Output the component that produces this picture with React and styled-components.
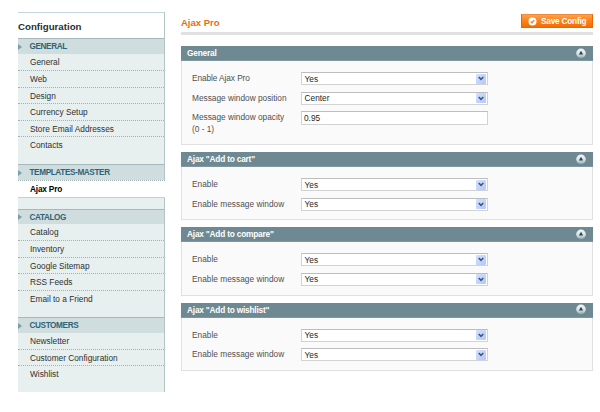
import React from "react";
import styled, { createGlobalStyle, css } from "styled-components";

const GlobalStyle = createGlobalStyle`
  * { box-sizing: border-box; }
  body {
    margin: 0;
    background: #fff;
    font-family: "Liberation Sans", Arial, sans-serif;
    font-size: 8.3px;
    color: #2f2f2f;
  }
`;

const Page = styled.div`
  display: flex;
  gap: 16px;
  width: 600px;
  height: 412px;
  padding: 12px 7px 0 18px;
  overflow: hidden;
`;

const Sidebar = styled.nav`
  width: 147px;
  height: 380px;
  flex: none;
  background: #e7efef;
  border-top: 1px solid #c5d8d9;
  border-right: 1px solid #b4c5c6;
`;

const SidebarTitle = styled.h3`
  margin: 0;
  height: 25px;
  padding-top: 1px;
  background: #fff;
  font-size: 9.7px;
  line-height: 26px;
  font-weight: bold;
  color: #253033;
`;

const Group = styled.section`
  height: ${(p) => p.$height}px;
`;

const GroupTitle = styled.h4`
  display: flex;
  align-items: center;
  gap: 7.5px;
  margin: 0;
  height: ${(p) => p.$height || 16}px;
  background: #d0dddf;
  border-top: 1px solid #a3b9bd;
  font-size: 8.2px;
  letter-spacing: -0.38px;
  font-weight: bold;
  color: #2f6477;
`;

const Marker = styled.span`
  border-left: 4.5px solid #79a0ac;
  border-top: 3px solid transparent;
  border-bottom: 3px solid transparent;
`;

const activeItem = css`
  height: 17px;
  margin-right: -1px;
  background: #fff;
  border-top: 1px dotted #9fb0b1;
  border-bottom: 1px solid #c3d1d2;
  font-size: 8.3px;
  letter-spacing: -0.2px;
  font-weight: bold;
  color: #000;
  line-height: 16px;
`;

const Item = styled.a`
  display: block;
  height: 16.6px;
  padding-left: 12px;
  line-height: 16px;
  white-space: nowrap;
  border-bottom: 1px dotted #a2b1b2;
  &:last-child { border-bottom-color: transparent; }
  ${(p) => p.$active && activeItem}
  ${(p) => p.$active && css`&:last-child { height: 18px; border-bottom-color: #c3d1d2; }`}
`;

const Main = styled.main`
  flex: none;
  width: 412px;
`;

const Header = styled.header`
  display: flex;
  justify-content: space-between;
  align-items: flex-start;
  height: 23px;
  margin-bottom: 11px;
  padding-top: 2px;
  border-bottom: 3px solid #e1e1e1;
`;

const Heading = styled.h2`
  margin: 0;
  font-size: 9.5px;
  line-height: 18px;
  font-weight: bold;
  color: #eb6a12;
`;

const SaveButton = styled.button`
  display: flex;
  align-items: center;
  gap: 4px;
  width: 72px;
  height: 14px;
  padding: 0 0 0 6px;
  border: 1px solid #ed6502;
  border-top-color: #f18a3a;
  background: linear-gradient(#fda04a, #fb8420 45%, #f56d00);
  color: #fff;
  font: bold 8.3px "Liberation Sans", Arial, sans-serif;
  letter-spacing: -0.24px;
  white-space: nowrap;
`;

const Panel = styled.section`
  margin-bottom: 7px;
`;

const PanelHead = styled.div`
  display: flex;
  align-items: center;
  justify-content: space-between;
  height: 15px;
  padding: 0 7px 0 6px;
  background: #6f8992;
  border-bottom: 1px solid #7f979d;
  color: #fff;
  font-size: 8.3px;
  letter-spacing: -0.2px;
  font-weight: bold;
`;

const PanelBody = styled.div`
  display: flex;
  flex-direction: column;
  gap: 6.5px;
  height: ${(p) => p.$height}px;
  padding: 11px 0 0 10px;
  background: #fafafa;
  border: 1px solid #e0e0e0;
  border-top: 0;
`;

const Field = styled.div`
  display: grid;
  grid-template-columns: 109px 187px;
  height: 13px;
`;

const Label = styled.label`
  line-height: 12px;
  letter-spacing: ${(p) => p.$spacing || 0}px;
  color: #505050;
  white-space: pre-line;
`;

const Control = styled.div`
  display: flex;
  justify-content: space-between;
  align-items: center;
  height: ${(p) => (p.$text ? 14 : 13)}px;
  padding: 0 1px 0 2px;
  background: #fff;
  border: 1px solid #d2d2d2;
  border-top-color: #bdbdbd;
  color: #262626;
`;

const Value = styled.span`
  padding-left: ${(p) => (p.$text ? 0 : 0.6)}px;
`;

const Arrow = styled.span`
  display: flex;
  align-items: center;
  justify-content: center;
  width: 10px;
  height: 10px;
  border-radius: 1px;
  background: linear-gradient(135deg, #d5e1fd, #afc8fa);
`;

const Chevron = () => (
  <svg width="6" height="5" viewBox="0 0 6 5">
    <path d="M.7 1 3 3.3 5.3 1" fill="none" stroke="#41557d" strokeWidth="1.6" />
  </svg>
);

const Collapse = () => (
  <svg width="10" height="11" viewBox="0 0 10 11">
    <defs>
      <linearGradient id="knob" x1="0" y1="0" x2="0" y2="1">
        <stop offset="0" stopColor="#f4f8f8" />
        <stop offset=".6" stopColor="#d4e0e2" />
        <stop offset="1" stopColor="#91a9af" />
      </linearGradient>
    </defs>
    <circle cx="5" cy="5.3" r="4.8" fill="url(#knob)" />
    <path d="M5 2.7 7.1 6.5H2.9Z" fill="#21464f" />
  </svg>
);

const CheckIcon = () => (
  <svg width="9" height="9" viewBox="0 0 9 9">
    <circle cx="4.5" cy="4.5" r="4" fill="#fff" />
    <path d="M2.7 4.5 4 5.8 6.3 2.9" fill="none" stroke="#f07a1c" strokeWidth="1.2" />
  </svg>
);

const groups = [
  { title: "GENERAL", height: 126, head: 16.4, items: ["General", "Web", "Design", "Currency Setup", "Store Email Addresses", "Contacts"] },
  { title: "TEMPLATES-MASTER", height: 45, head: 16, items: ["Ajax Pro"] },
  { title: "CATALOG", height: 108, head: 15.4, items: ["Catalog", "Inventory", "Google Sitemap", "RSS Feeds", "Email to a Friend"] },
  { title: "CUSTOMERS", height: 75, head: 16, items: ["Newsletter", "Customer Configuration", "Wishlist"] },
];

const toggles = [
  { label: "Enable", value: "Yes" },
  { label: "Enable message window", value: "Yes", spacing: 0.02 },
];

const panels = [
  {
    title: "General",
    height: 84,
    fields: [
      { label: "Enable Ajax Pro", value: "Yes", spacing: -0.08 },
      { label: "Message window position", value: "Center" },
      { label: "Message window opacity\n(0 - 1)", value: "0.95", text: true },
    ],
  },
  { title: 'Ajax "Add to cart"', height: 53.4, fields: toggles },
  { title: 'Ajax "Add to compare"', height: 53.4, fields: toggles },
  { title: 'Ajax "Add to wishlist"', height: 53.4, fields: toggles },
];

export default function App() {
  return (
    <>
      <GlobalStyle />
      <Page>
        <Sidebar>
          <SidebarTitle>Configuration</SidebarTitle>
          {groups.map((g) => (
            <Group key={g.title} $height={g.height}>
              <GroupTitle $height={g.head}><Marker />{g.title}</GroupTitle>
              <div>
                {g.items.map((name) => (
                  <Item key={name} $active={name === "Ajax Pro"}>{name}</Item>
                ))}
              </div>
            </Group>
          ))}
        </Sidebar>
        <Main>
          <Header>
            <Heading>Ajax Pro</Heading>
            <SaveButton><CheckIcon />Save Config</SaveButton>
          </Header>
          {panels.map((p) => (
            <Panel key={p.title}>
              <PanelHead>{p.title}<Collapse /></PanelHead>
              <PanelBody $height={p.height}>
                {p.fields.map((f) => (
                  <Field key={f.label}>
                    <Label $spacing={f.spacing}>{f.label}</Label>
                    <Control $text={f.text}>
                      <Value $text={f.text}>{f.value}</Value>
                      {!f.text && <Arrow><Chevron /></Arrow>}
                    </Control>
                  </Field>
                ))}
              </PanelBody>
            </Panel>
          ))}
        </Main>
      </Page>
    </>
  );
}
